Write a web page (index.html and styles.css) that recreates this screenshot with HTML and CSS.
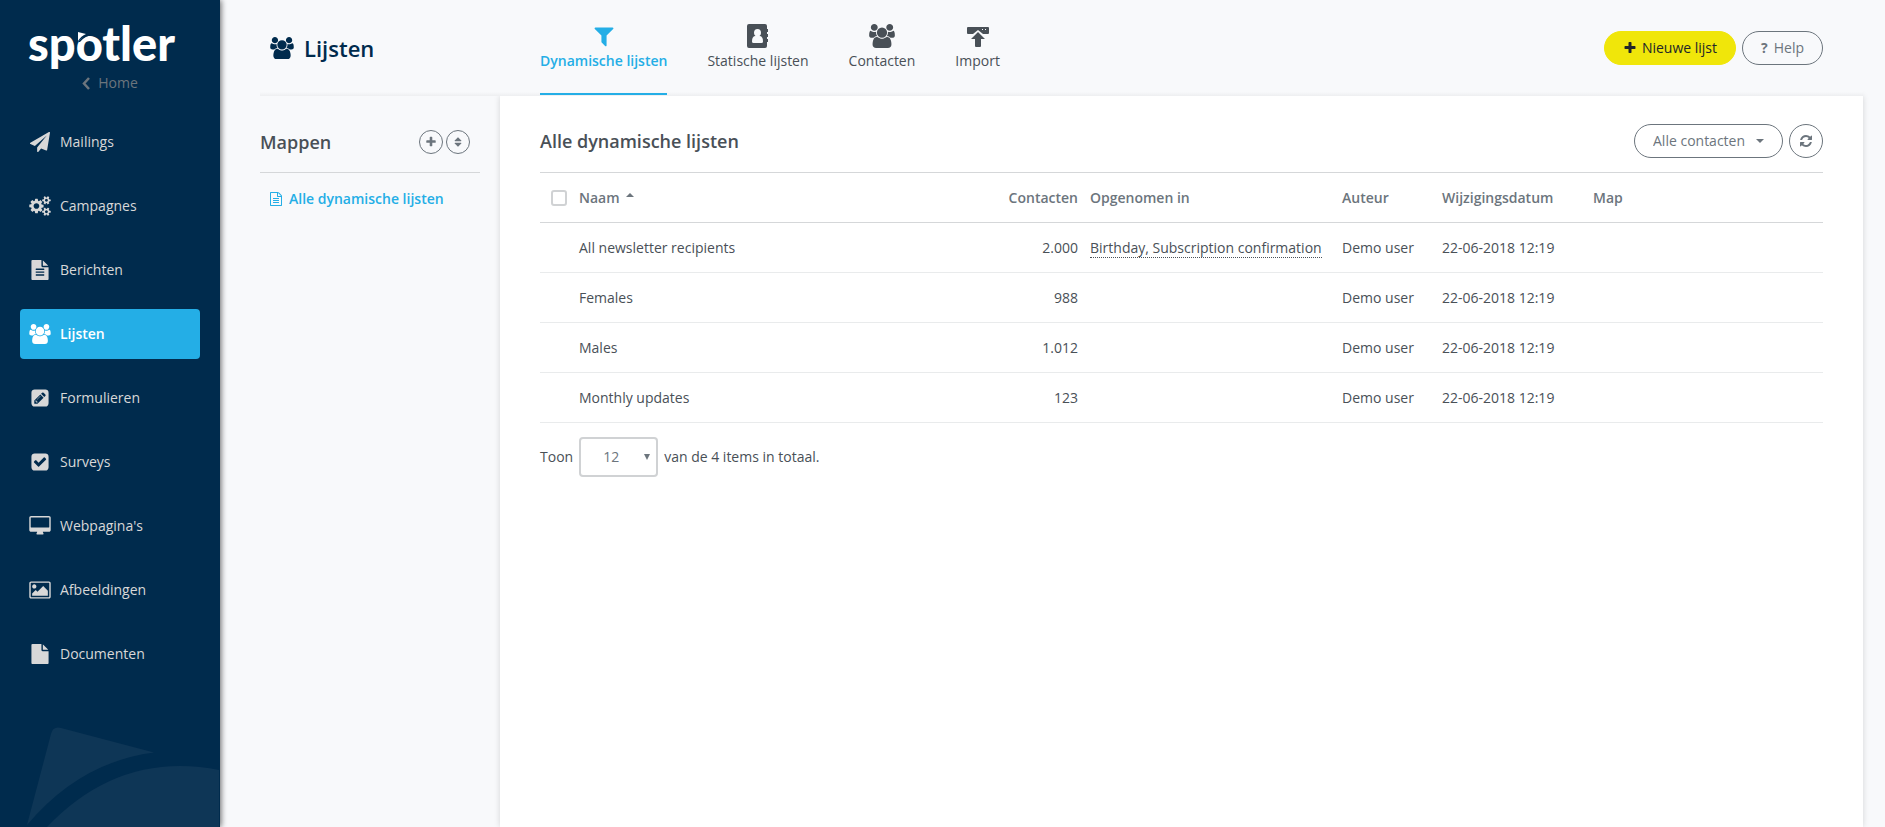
FILE: index.html
```html
<!DOCTYPE html>
<html lang="nl">
<head>
  <meta charset="UTF-8">
  <meta name="viewport" content="width=device-width, initial-scale=1.0">
  <title>Spotler - Lijsten</title>
  <link rel="stylesheet" href="styles.css">
</head>
<body>

  <!-- Shared icons -->
  <svg class="sprite" aria-hidden="true">
    <symbol id="users" viewBox="0 0 1920 1792"><path d="M593 896q-162 5-265 128h-134q-82 0-138-40.5t-56-118.5q0-353 124-353 6 0 43.5 21t97.5 42.5 119 21.5q67 0 133-23-5 37-5 66 0 139 81 256zm1071 637q0 120-73 189.5t-194 69.5h-874q-121 0-194-69.5t-73-189.5q0-53 3.5-103.5t14-109 26.5-108.5 43-97.5 62-81 85.5-53.5 111.5-20q10 0 43 21.5t73 48 107 48 135 21.5 135-21.5 107-48 73-48 43-21.5q61 0 111.5 20t85.5 53.5 62 81 43 97.5 26.5 108.5 14 109 3.5 103.5zm-1024-1277q0 106-75 181t-181 75-181-75-75-181 75-181 181-75 181 75 75 181zm704 384q0 159-112.5 271.5t-271.5 112.5-271.5-112.5-112.5-271.5 112.5-271.5 271.5-112.5 271.5 112.5 112.5 271.5zm576 225q0 78-56 118.5t-138 40.5h-134q-103-123-265-128 81-117 81-256 0-29-5-66 66 23 133 23 59 0 119-21.5t97.5-42.5 43.5-21q124 0 124 353zm-128-609q0 106-75 181t-181 75-181-75-75-181 75-181 181-75 181 75 75 181z"/></symbol>
    <symbol id="plus" viewBox="0 0 1792 1792"><path d="M1600 736v192q0 40-28 68t-68 28h-416v416q0 40-28 68t-68 28h-192q-40 0-68-28t-28-68v-416h-416q-40 0-68-28t-28-68v-192q0-40 28-68t68-28h416v-416q0-40 28-68t68-28h192q40 0 68 28t28 68v416h416q40 0 68 28t28 68z"/></symbol>
  </svg>

  <div class="app">
    <!-- Sidebar -->
    <aside class="sidebar">
      <div class="logo">spotler
        <svg class="logo-notch" viewBox="0 0 18 10"><path d="M0 0l8 2Q3 4 0 9z" fill="#fff"/><path d="M1 10Q6 3 16 2" fill="none" stroke="#002b4d" stroke-width="1.500"/></svg>
      </div>
      <a class="home" href="#"><svg viewBox="0 0 8 13"><path d="M7 1L2 6.500l5 5.500" fill="none" stroke="currentColor" stroke-width="2.500"/></svg>Home</a>

      <nav class="menu">
        <a href="#"><span class="icon"><svg viewBox="0 0 1792 1792"><path d="M1764 11q33 24 27 64l-256 1536q-5 29-32 45-14 8-31 8-11 0-24-5l-453-185-242 295q-18 23-49 23-13 0-22-4-19-7-30.500-23.500t-11.500-36.500v-349l864-1059-1069 925-395-162q-37-14-40-55-2-40 32-59l1664-960q15-9 32-9 20 0 36 11z"/></svg></span>Mailings</a>
        <a href="#"><span class="icon"><svg class="wide" viewBox="0 0 1920 1792"><path d="M896 896q0-106-75-181t-181-75-181 75-75 181 75 181 181 75 181-75 75-181zm768 512q0-52-38-90t-90-38-90 38-38 90q0 53 37.500 90.500t90.500 37.500 90.500-37.500 37.500-90.500zm0-1024q0-52-38-90t-90-38-90 38-38 90q0 53 37.500 90.500t90.500 37.500 90.500-37.500 37.500-90.500zm-384 421v185q0 10-7 19.500t-16 10.500l-155 24q-11 35-32 76 34 48 90 115 7 11 7 20 0 12-7 19-23 30-82.500 89.500t-78.500 59.500q-11 0-21-7l-115-90q-37 19-77 31-11 108-23 155-7 24-30 24h-186q-11 0-20-7.500t-10-17.500l-23-153q-34-10-75-31l-118 89q-7 7-20 7-11 0-21-8-144-133-144-160 0-9 7-19 10-14 41-53t47-61q-23-44-35-82l-152-24q-10-1-17-9.500t-7-19.500v-185q0-10 7-19.500t16-10.500l155-24q11-35 32-76-34-48-90-115-7-11-7-20 0-12 7-20 22-30 82-89t79-59q11 0 21 7l115 90q34-18 77-32 11-108 23-154 7-24 30-24h186q11 0 20 7.500t10 17.500l23 153q34 10 75 31l118-89q8-7 20-7 11 0 21 8 144 133 144 160 0 8-7 19-12 16-42 54t-45 60q23 48 34 82l152 23q10 2 17 10.500t7 19.500zm640 533v140q0 16-149 31-12 27-30 52 51 113 51 138 0 4-4 7-122 71-124 71-8 0-46-47t-52-68q-20 2-30 2t-30-2q-14 21-52 68t-46 47q-2 0-124-71-4-3-4-7 0-25 51-138-18-25-30-52-149-15-149-31v-140q0-16 149-31 13-29 30-52-51-113-51-138 0-4 4-7 4-2 35-20t59-34 30-16q8 0 46 46.500t52 67.500q20-2 30-2t30 2q51-71 92-112l6-2q4 0 124 70 4 3 4 7 0 25-51 138 17 23 30 52 149 15 149 31zm0-1024v140q0 16-149 31-12 27-30 52 51 113 51 138 0 4-4 7-122 71-124 71-8 0-46-47t-52-68q-20 2-30 2t-30-2q-14 21-52 68t-46 47q-2 0-124-71-4-3-4-7 0-25 51-138-18-25-30-52-149-15-149-31v-140q0-16 149-31 13-29 30-52-51-113-51-138 0-4 4-7 4-2 35-20t59-34 30-16q8 0 46 46.500t52 67.500q20-2 30-2t30 2q51-71 92-112l6-2q4 0 124 70 4 3 4 7 0 25-51 138 17 23 30 52 149 15 149 31z"/></svg></span>Campagnes</a>
        <a href="#"><span class="icon"><svg viewBox="0 0 1792 1792"><path d="M1596 476q14 14 28 36h-472v-472q22 14 36 28zm-476 164h544v1056q0 40-28 68t-68 28h-1344q-40 0-68-28t-28-68v-1600q0-40 28-68t68-28h800v544q0 40 28 68t68 28zm160 736v-64q0-14-9-23t-23-9h-704q-14 0-23 9t-9 23v64q0 14 9 23t23 9h704q14 0 23-9t9-23zm0-256v-64q0-14-9-23t-23-9h-704q-14 0-23 9t-9 23v64q0 14 9 23t23 9h704q14 0 23-9t9-23zm0-256v-64q0-14-9-23t-23-9h-704q-14 0-23 9t-9 23v64q0 14 9 23t23 9h704q14 0 23-9t9-23z"/></svg></span>Berichten</a>
        <a class="active" href="#"><span class="icon"><svg class="wide"><use href="#users"/></svg></span>Lijsten</a>
        <a href="#"><span class="icon"><svg viewBox="0 0 1792 1792"><path d="M532 1108l152 152-52 52h-56v-96h-96v-56zm414-390q14 13-3 30l-291 291q-17 17-30 3-14-13 3-30l291-291q17-17 30-3zm-274 690l544-544-288-288-544 544v288h288zm608-608l92-92q28-28 28-68t-28-68l-152-152q-28-28-68-28t-68 28l-92 92zm384-384v960q0 119-84.500 203.500t-203.500 84.500h-960q-119 0-203.500-84.500t-84.500-203.500v-960q0-119 84.500-203.500t203.500-84.500h960q119 0 203.500 84.500t84.500 203.500z"/></svg></span>Formulieren</a>
        <a href="#"><span class="icon"><svg viewBox="0 0 1792 1792"><path d="M813 1299l614-614q19-19 19-45t-19-45l-102-102q-19-19-45-19t-45 19l-467 467-211-211q-19-19-45-19t-45 19l-102 102q-19 19-19 45t19 45l358 358q19 19 45 19t45-19zm851-883v960q0 119-84.500 203.500t-203.500 84.500h-960q-119 0-203.500-84.500t-84.500-203.500v-960q0-119 84.500-203.500t203.500-84.500h960q119 0 203.500 84.500t84.500 203.500z"/></svg></span>Surveys</a>
        <a href="#"><span class="icon"><svg class="wide" viewBox="0 0 1920 1792"><path d="M1792 992v-832q0-13-9.500-22.500t-22.500-9.500h-1600q-13 0-22.500 9.500t-9.500 22.500v832q0 13 9.500 22.500t22.500 9.500h1600q13 0 22.500-9.500t9.500-22.500zm128-832v1088q0 66-47 113t-113 47h-544q0 37 16 77.500t32 71 16 43.500q0 26-19 45t-45 19h-512q-26 0-45-19t-19-45q0-14 16-44t32-70 16-78h-544q-66 0-113-47t-47-113v-1088q0-66 47-113t113-47h1600q66 0 113 47t47 113z"/></svg></span>Webpagina's</a>
        <a href="#"><span class="icon"><svg class="wide" viewBox="0 0 1920 1792"><path d="M640 576q0 80-56 136t-136 56-136-56-56-136 56-136 136-56 136 56 56 136zm1024 384v448h-1408v-192l320-320 160 160 512-512zm96-704h-1600q-13 0-22.500 9.500t-9.500 22.500v1216q0 13 9.500 22.500t22.500 9.500h1600q13 0 22.500-9.500t9.500-22.500v-1216q0-13-9.500-22.500t-22.500-9.500zm160 32v1216q0 66-47 113t-113 47h-1600q-66 0-113-47t-47-113v-1216q0-66 47-113t113-47h1600q66 0 113 47t47 113z"/></svg></span>Afbeeldingen</a>
        <a href="#"><span class="icon"><svg viewBox="0 0 1792 1792"><path d="M1152 512v-472q22 14 36 28l408 408q14 14 28 36h-472zm-128 32q0 40 28 68t68 28h544v1056q0 40-28 68t-68 28h-1344q-40 0-68-28t-28-68v-1600q0-40 28-68t68-28h800v544z"/></svg></span>Documenten</a>
      </nav>

      <svg class="decoration" viewBox="0 0 220 107"><path d="M51 14Q53 6 61 8L154 32.500Q80 42 27 105z"/><path d="M47 107Q105 46 180 46Q200 46 219 50V107z"/></svg>
    </aside>

    <main class="main">
      <!-- Top bar -->
      <header class="topbar">
        <h1><svg><use href="#users"/></svg>Lijsten</h1>
        <nav class="tabs">
          <a class="active" href="#"><svg viewBox="0 0 1792 1792"><path d="M1595 295q17 41-14 70l-493 493v742q0 42-39 59-13 5-25 5-27 0-45-19l-256-256q-19-19-19-45v-486l-493-493q-31-29-14-70 17-39 59-39h1280q42 0 59 39z"/></svg>Dynamische lijsten</a>
          <a href="#"><svg viewBox="0 0 24 24"><path fill-rule="evenodd" d="M3 0h16q2 0 2 2v3h1v3h-1v2h1v3h-1v2h1v3h-1v4q0 2-2 2H3q-2 0-2-2V2q0-2 2-2zm8.500 5q-3.500 0-3.500 4 0 2 1.500 3Q6 12 6 17.500q0 1.500 1.500 1.500h8q1.500 0 1.500-1.500 0-5.500-3.500-5.500Q15 11 15 9q0-4-3.500-4z"/></svg>Statische lijsten</a>
          <a href="#"><svg class="wide"><use href="#users"/></svg>Contacten</a>
          <a href="#"><svg viewBox="0 0 24 24"><path fill-rule="evenodd" d="M2 3h20q1 0 1 1v5q0 1-1 1h-5l-5-4-5 4H2q-1 0-1-1V4q0-1 1-1zm14 2v1h1V5zm3 0v1h1V5zM12 8l7 7h-4v7q0 1-1 1h-4q-1 0-1-1v-7H5z"/></svg>Import</a>
        </nav>
        <div class="actions">
          <button class="pill primary" type="button"><svg><use href="#plus"/></svg>Nieuwe lijst</button>
          <button class="pill" type="button"><b>?</b>Help</button>
        </div>
      </header>

      <div class="content">
        <!-- Folders -->
        <section class="folders">
          <div class="section-head">
            <h2>Mappen</h2>
            <div class="folder-buttons">
              <button type="button" aria-label="Map toevoegen"><svg><use href="#plus"/></svg></button>
              <button type="button" aria-label="Sorteren"><svg viewBox="0 0 1792 1792"><path d="M1408 1088q0 26-19 45l-448 448q-19 19-45 19t-45-19l-448-448q-19-19-19-45t19-45 45-19h896q26 0 45 19t19 45zm0-384q0 26-19 45t-45 19h-896q-26 0-45-19t-19-45 19-45l448-448q19-19 45-19t45 19l448 448q19 19 19 45z"/></svg></button>
            </div>
          </div>
          <a class="folder" href="#"><svg viewBox="0 0 1792 1792"><path d="M1596 380q28 28 48 76t20 88v1152q0 40-28 68t-68 28h-1344q-40 0-68-28t-28-68v-1600q0-40 28-68t68-28h896q40 0 88 20t76 48zm-444-244v376h376q-10-29-22-41l-313-313q-12-12-41-22zm384 1528v-1024h-416q-40 0-68-28t-28-68v-416h-768v1536h1280zm-1024-864q0-14 9-23t23-9h704q14 0 23 9t9 23v64q0 14-9 23t-23 9h-704q-14 0-23-9t-9-23v-64zm736 224q14 0 23 9t9 23v64q0 14-9 23t-23 9h-704q-14 0-23-9t-9-23v-64q0-14 9-23t23-9h704zm0 256q14 0 23 9t9 23v64q0 14-9 23t-23 9h-704q-14 0-23-9t-9-23v-64q0-14 9-23t23-9h704z"/></svg>Alle dynamische lijsten</a>
        </section>

        <!-- List overview -->
        <section class="panel">
          <div class="section-head">
            <h2>Alle dynamische lijsten</h2>
            <div class="actions">
              <span class="select filter">
                <select aria-label="Filter">
                  <option>Alle contacten</option>
                </select>
              </span>
              <button class="pill round" type="button" aria-label="Vernieuwen"><svg viewBox="0 0 1792 1792"><path d="M1639 1056q0 5-1 7-64 268-268 434.500t-478 166.500q-146 0-282.500-55t-243.500-157l-129 129q-19 19-45 19t-45-19-19-45v-448q0-26 19-45t45-19h448q26 0 45 19t19 45-19 45l-137 137q71 66 161 102t187 36q134 0 250-65t186-179q11-17 53-117 8-23 30-23h192q13 0 22.500 9.500t9.500 22.500zm25-800v448q0 26-19 45t-45 19h-448q-26 0-45-19t-19-45 19-45l138-138q-148-137-349-137-134 0-250 65t-186 179q-11 17-53 117-8 23-30 23h-199q-13 0-22.500-9.500t-9.500-22.500v-7q65-268 270-434.500t480-166.500q146 0 284 55.500t245 156.500l130-129q19-19 45-19t45 19 19 45z"/></svg></button>
            </div>
          </div>

          <table>
            <thead>
              <tr>
                <th class="col-check"><input type="checkbox" aria-label="Alles selecteren"></th>
                <th>Naam<span class="sort-up"></span></th>
                <th class="col-count">Contacten</th>
                <th class="col-used">Opgenomen in</th>
                <th class="col-author">Auteur</th>
                <th class="col-date">Wijzigingsdatum</th>
                <th class="col-map">Map</th>
              </tr>
            </thead>
            <tbody>
              <tr><td></td><td>All newsletter recipients</td><td class="col-count">2.000</td><td><span class="used">Birthday, Subscription confirmation</span></td><td>Demo user</td><td>22-06-2018 12:19</td><td></td></tr>
              <tr><td></td><td>Females</td><td class="col-count">988</td><td></td><td>Demo user</td><td>22-06-2018 12:19</td><td></td></tr>
              <tr><td></td><td>Males</td><td class="col-count">1.012</td><td></td><td>Demo user</td><td>22-06-2018 12:19</td><td></td></tr>
              <tr><td></td><td>Monthly updates</td><td class="col-count">123</td><td></td><td>Demo user</td><td>22-06-2018 12:19</td><td></td></tr>
            </tbody>
          </table>

          <div class="paging">
            <label for="pageSize">Toon</label>
            <span class="select size">
              <select id="pageSize">
                <option>12</option>
              </select>
            </span>
            <span>van de 4 items in totaal.</span>
          </div>
        </section>
      </div>
    </main>
  </div>

</body>
</html>
```
FILE: styles.css
```css
* {
  box-sizing: border-box;
}

body {
  margin: 0;
  background: #f8f9fb;
  color: #495057;
  font-family: "Open Sans", "Noto Sans", sans-serif;
  font-size: 14px;
  line-height: 20px;
}

a {
  color: inherit;
  text-decoration: none;
}

svg {
  display: block;
  fill: currentColor;
}

button,
select {
  font: inherit;
  color: #6c757d;
  background: transparent;
  cursor: pointer;
}

.sprite {
  position: absolute;
  width: 0;
  height: 0;
}

.app {
  display: flex;
  min-height: 100vh;
}

/* Sidebar */
.sidebar {
  position: relative;
  z-index: 2;
  display: flex;
  flex-direction: column;
  flex: none;
  width: 220px;
  background: #002b4d;
  color: #d8d8d8;
  box-shadow: 1px 0 6px rgba(0, 0, 0, 0.6);
}

.logo {
  position: relative;
  margin: 13px 0 0 28px;
  color: #fff;
  font-family: Lato, sans-serif;
  font-size: 47px;
  font-weight: 900;
  line-height: 60px;
}

.logo-notch {
  position: absolute;
  left: 50px;
  top: 19px;
  width: 18px;
}

.home {
  display: flex;
  align-items: center;
  justify-content: center;
  gap: 8px;
  color: #6c757d;
}

.home svg {
  width: 8px;
}

.menu {
  display: flex;
  flex-direction: column;
  gap: 14px;
  padding: 24px 20px;
}

.menu a {
  display: flex;
  align-items: center;
  gap: 8px;
  height: 50px;
  padding: 0 8px;
  border-radius: 4px;
}

.menu .active {
  background: #24aee6;
  color: #fff;
  font-weight: 600;
}

.menu .icon {
  display: flex;
  justify-content: center;
  width: 24px;
}

.menu svg {
  width: 20px;
  height: 20px;
}

.menu svg.wide {
  width: 22px;
}

.decoration {
  width: 220px;
  margin-top: auto;
  fill: #0e3656;
}

/* Top bar */
.main {
  flex: 1;
  display: flex;
  flex-direction: column;
  min-width: 0;
  padding: 0 22px 0 40px;
}

.topbar {
  position: relative;
  z-index: 1;
  display: flex;
  height: 96px;
  padding-right: 40px;
  background: linear-gradient(#f8f9fb, #eeeff1) bottom / 100% 4px no-repeat #f8f9fb;
}

.topbar h1 {
  display: flex;
  align-items: center;
  gap: 10px;
  width: 280px;
  margin: 0;
  padding-left: 10px;
  color: #002b4d;
  font-size: 22px;
  font-weight: 600;
  line-height: 30px;
}

.topbar h1 svg {
  width: 24px;
  height: 22px;
}

.tabs {
  display: flex;
  gap: 40px;
  margin-right: auto;
}

.tabs a {
  display: flex;
  flex-direction: column;
  align-items: center;
  gap: 3px;
  height: 95px;
  padding-top: 24px;
}

.tabs svg {
  width: 24px;
  height: 24px;
}

.tabs svg.wide {
  width: 26px;
}

.tabs .active {
  color: #24aee6;
  font-weight: 600;
  border-bottom: 2px solid #24aee6;
}

.actions {
  display: flex;
  align-items: center;
  gap: 6px;
}

.pill {
  display: flex;
  align-items: center;
  justify-content: center;
  gap: 6px;
  height: 34px;
  padding: 0 18px;
  border: 1px solid #6c757d;
  border-radius: 17px;
}

.pill svg {
  width: 14px;
  height: 14px;
}

.pill.primary {
  gap: 5px;
  background: #f0e60a;
  border-color: #f0e60a;
  color: #212529;
}

.pill.round {
  width: 34px;
  padding: 0;
}

/* Content */
.content {
  display: flex;
  flex: 1;
}

.section-head {
  display: flex;
  align-items: center;
  justify-content: space-between;
  height: 77px;
  border-bottom: 1px solid #d5d7d9;
}

.section-head h2 {
  margin: 0;
  font-size: 18px;
  font-weight: 600;
  line-height: 24px;
}

.folders {
  width: 240px;
  padding-right: 20px;
}

.folders .section-head {
  padding: 16px 10px 0 0;
}

.panel .section-head {
  padding-top: 13px;
}

.folder-buttons {
  display: flex;
  gap: 3px;
}

.folder-buttons button {
  display: flex;
  align-items: center;
  justify-content: center;
  width: 24px;
  height: 24px;
  padding: 0;
  border: 1px solid #6c757d;
  border-radius: 50%;
}

.folder-buttons svg {
  width: 12px;
  height: 12px;
}

.folder {
  display: flex;
  align-items: center;
  gap: 6px;
  padding: 16px 9px;
  color: #24aee6;
  font-weight: 600;
}

.folder svg {
  width: 14px;
  height: 14px;
}

.panel {
  flex: 1;
  min-width: 0;
  padding: 0 40px;
  background: #fff;
  box-shadow: 0 0 6px rgba(0, 0, 0, 0.15);
}

/* Table */
table {
  width: 100%;
  table-layout: fixed;
  border-collapse: separate;
  border-spacing: 0;
}

th,
td {
  height: 50px;
  padding: 0 6px;
  text-align: left;
  border-bottom: 1px solid #e9ebec;
}

th {
  color: #6c757d;
  font-weight: 600;
  border-color: #d5d7d9;
}

.col-check {
  width: 33px;
}

th.col-count {
  width: 100px;
}

.col-count {
  text-align: right;
}

.col-used {
  width: 252px;
}

.col-author {
  width: 100px;
}

.col-date {
  width: 151px;
}

.col-map {
  width: 236px;
}

input[type="checkbox"] {
  display: block;
  appearance: none;
  width: 16px;
  height: 16px;
  margin: 0 0 0 5px;
  border: 2px solid #d0d2d4;
  border-radius: 3px;
}

.sort-up {
  display: inline-block;
  margin-left: 6px;
  vertical-align: 6px;
  border: 4px solid transparent;
  border-top: 0;
  border-bottom-color: #6c757d;
}

.used {
  border-bottom: 1px dotted #495057;
}

/* Drop-downs */
.select {
  position: relative;
}

.select::after {
  content: "";
  position: absolute;
  pointer-events: none;
  border: 4px solid transparent;
  border-bottom: 0;
  border-top-color: #6c757d;
}

.select select {
  display: block;
  appearance: none;
}

.filter select {
  width: 149px;
  height: 34px;
  padding: 0 18px;
  border: 1px solid #6c757d;
  border-radius: 17px;
}

.filter::after {
  right: 19px;
  top: 15px;
}

.size select {
  width: 79px;
  height: 40px;
  padding: 0 22px;
  border: 2px solid #d0d2d4;
  border-radius: 4px;
}

.size::after {
  right: 8px;
  top: 17px;
  border-width: 6px 3px 0;
}

.paging {
  display: flex;
  align-items: center;
  gap: 6px;
  padding: 14px 0;
}
```
